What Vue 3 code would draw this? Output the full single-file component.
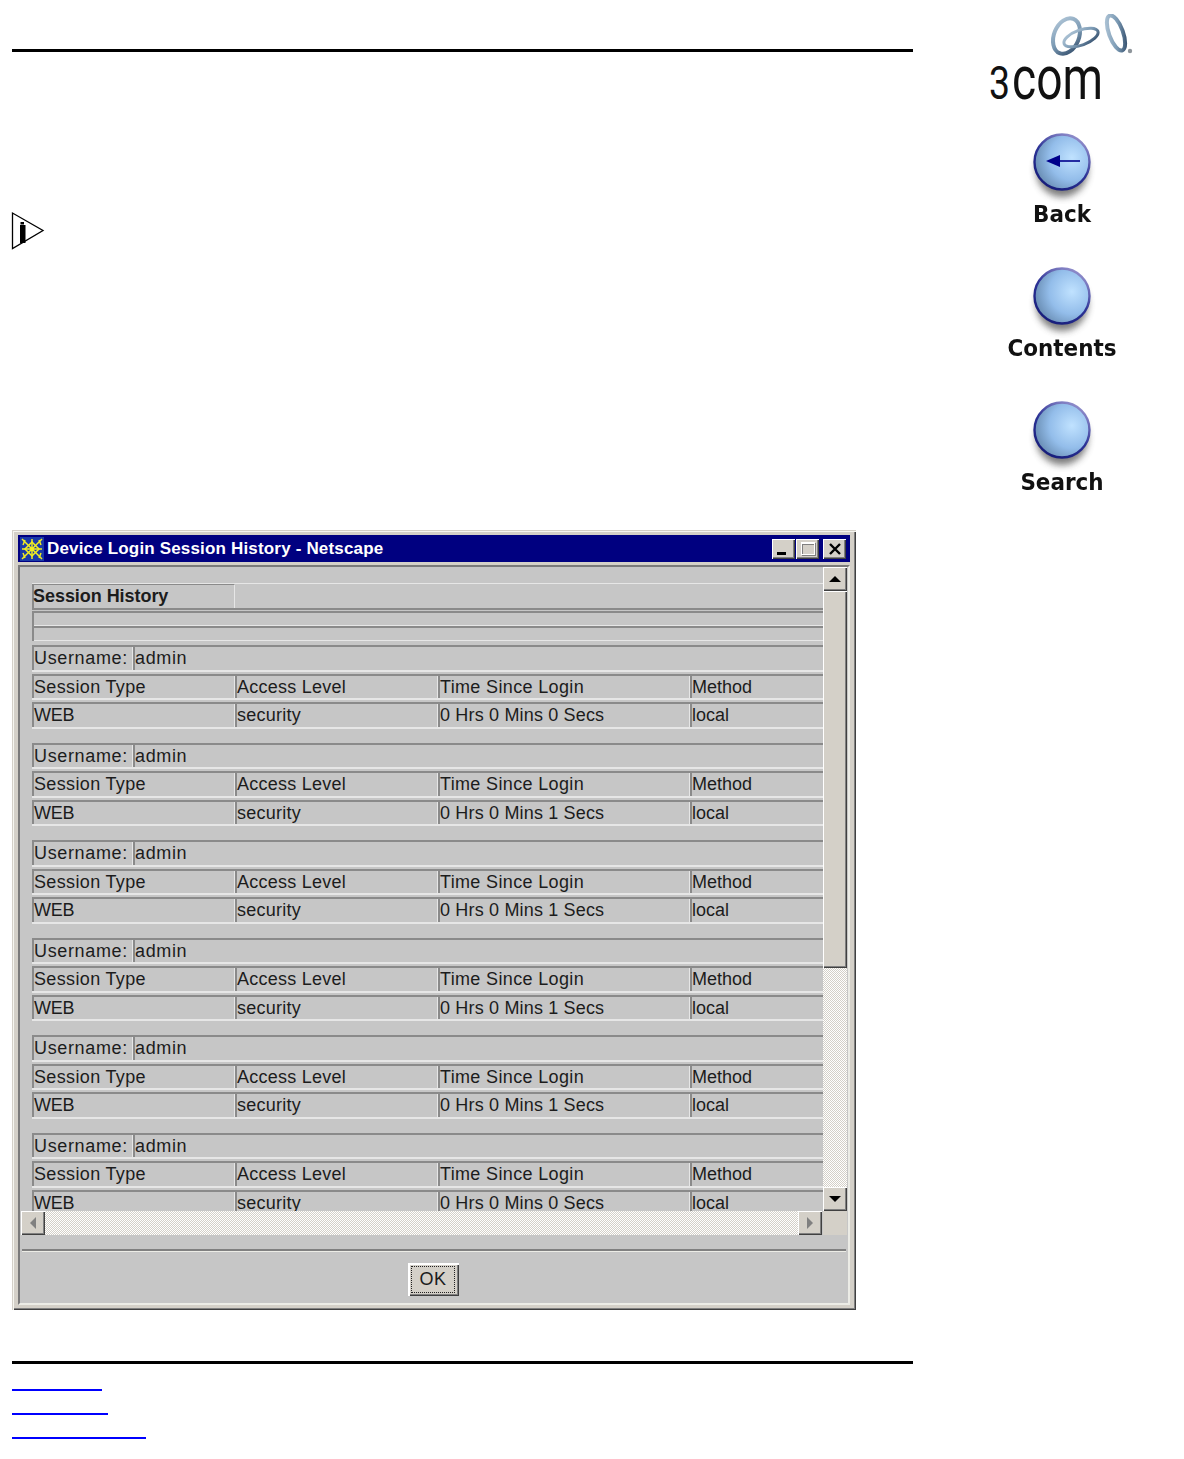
<script setup>
const sessions = ['0', '1', '1', '1', '1', '0']
const links = ['link-a', 'link-b', 'link-c']
const navs = [
  { label: 'Back', arrow: true },
  { label: 'Contents', arrow: false },
  { label: 'Search', arrow: false }
]
</script>

<template>
  <div class="page">
    <main class="main">
      <div class="rule"></div>
      <svg class="info" width="34" height="40" viewBox="0 0 34 40">
        <path d="M1.5 2 V37.5 L32 19.5 Z" fill="#fff" stroke="#000" stroke-width="1.3" />
        <rect x="9.5" y="11" width="3.5" height="2.5" fill="#000" />
        <rect x="9" y="14" width="5.5" height="18" fill="#000" />
      </svg>

      <section class="window">
        <header class="titlebar">
          <svg class="ticon" width="24" height="24" viewBox="0 0 24 24">
            <rect width="24" height="24" fill="#1a3aa8" />
            <g stroke="#f2ee20" stroke-width="1.5" fill="none">
              <path d="M2 2 L22 22 M22 2 L2 22 M12 2 V22 M2 12 H22" />
              <path d="M12 5 L19 12 L12 19 L5 12 Z" />
              <path d="M5 3 L3 8 M19 3 L21 8 M5 21 L3 16 M19 21 L21 16" />
            </g>
          </svg>
          <span class="ttext">Device Login Session History - Netscape</span>
          <div class="tbtns">
            <button class="tbtn"><i class="min"></i></button>
            <button class="tbtn"><i class="max"></i></button>
            <button class="tbtn close">
              <svg width="14" height="12" viewBox="0 0 14 12"><path d="M2 1 L12 11 M12 1 L2 11" stroke="#000" stroke-width="2.4" /></svg>
            </button>
          </div>
        </header>

        <div class="client">
          <div class="pane">
            <div class="view">
              <div class="row head"><div class="cell c1"><b>Session History</b></div></div>
              <div class="blank"><div class="thin"></div><div class="thin"></div></div>
              <div v-for="(s, i) in sessions" :key="i" class="group">
                <div class="row">
                  <div class="cell cu">Username:</div>
                  <div class="cell cv">admin</div>
                </div>
                <div class="row">
                  <div class="cell c1">Session Type</div>
                  <div class="cell c2">Access Level</div>
                  <div class="cell c3">Time Since Login</div>
                  <div class="cell c4">Method</div>
                </div>
                <div class="row">
                  <div class="cell c1 tight">WEB</div>
                  <div class="cell c2">security</div>
                  <div class="cell c3 data">0 Hrs 0 Mins {{ s }} Secs</div>
                  <div class="cell c4">local</div>
                </div>
              </div>
            </div>

            <div class="vbar">
              <div class="sbtn"><i class="tri up"></i></div>
              <div class="thumb"></div>
              <div class="track"></div>
              <div class="sbtn"><i class="tri down"></i></div>
            </div>

            <div class="hbar">
              <div class="sbtn"><i class="tri left"></i></div>
              <div class="track"></div>
              <div class="sbtn"><i class="tri right"></i></div>
            </div>
            <div class="corner"></div>
          </div>

          <div class="sep"></div>
          <div class="foot">
            <button class="ok"><span>OK</span></button>
          </div>
        </div>
      </section>

      <div class="rule lower"></div>
      <nav class="links">
        <a v-for="l in links" :key="l" href="#" class="link" :class="l"></a>
      </nav>
    </main>

    <aside class="side">
      <svg class="logo" width="160" height="106" viewBox="0 0 160 106">
        <defs>
          <linearGradient id="ring" x1="0" y1="0" x2="1" y2="1">
            <stop offset="0" stop-color="#b4c9da" />
            <stop offset=".55" stop-color="#7a99b3" />
            <stop offset="1" stop-color="#2c4664" />
          </linearGradient>
        </defs>
        <g fill="none" stroke="url(#ring)">
          <ellipse cx="83.5" cy="22" rx="12.5" ry="18.5" transform="rotate(22 83.5 22)" stroke-width="4" />
          <ellipse cx="98" cy="23.5" rx="18" ry="7.5" transform="rotate(-20 98 23.5)" stroke-width="3" />
          <ellipse cx="133" cy="19" rx="7" ry="18.5" transform="rotate(-20 133 19)" stroke-width="4" />
        </g>
        <circle cx="147" cy="37" r="2.2" fill="#8e959b" />
        <text class="brand three" x="6" y="85" textLength="21" lengthAdjust="spacingAndGlyphs">3</text>
        <text class="brand" x="29" y="85" textLength="91" lengthAdjust="spacingAndGlyphs">com</text>
      </svg>

      <div v-for="n in navs" :key="n.label" class="nav">
        <svg width="70" height="72" viewBox="0 0 70 72">
          <defs>
            <radialGradient :id="'b' + n.label" cx=".68" cy=".42" r=".82">
              <stop offset="0" stop-color="#c0e2ff" />
              <stop offset=".5" stop-color="#93bdea" />
              <stop offset="1" stop-color="#56779a" />
            </radialGradient>
            <linearGradient :id="'e' + n.label" x1=".8" y1="0" x2=".2" y2="1">
              <stop offset="0" stop-color="#9a96d0" />
              <stop offset=".5" stop-color="#2c3296" />
              <stop offset="1" stop-color="#151b78" />
            </linearGradient>
            <filter :id="'s' + n.label" x="-30%" y="-30%" width="160%" height="160%">
              <feGaussianBlur stdDeviation="3.5" />
            </filter>
          </defs>
          <ellipse cx="35" cy="38" rx="26" ry="27" fill="#444" opacity=".7" :filter="'url(#s' + n.label + ')'" />
          <circle cx="35" cy="30" r="27.5" :fill="'url(#b' + n.label + ')'" :stroke="'url(#e' + n.label + ')'" stroke-width="2.4" />
          <g v-if="n.arrow">
            <path d="M19 29 L33 23 V35 Z" fill="#00008b" />
            <path d="M30 29 H53" stroke="#00008b" stroke-width="1.6" />
          </g>
        </svg>
        <div class="nav-label">{{ n.label }}</div>
      </div>
    </aside>
  </div>
</template>

<style scoped>
.page {
  display: flex;
  width: 1184px;
  height: 1459px;
  background: #fff;
  overflow: hidden;
  font-family: "Liberation Sans", Arial, sans-serif;
}
.main {
  width: 901px;
  margin-left: 12px;
  padding-top: 49px;
  flex: none;
}
.rule {
  height: 3px;
  background: #000;
}
.info {
  display: block;
  margin: 159px 0 0 -1px;
}
.window {
  width: 844px;
  height: 780px;
  margin-top: 279px;
  box-sizing: border-box;
  padding: 5px 6px 5px 6px;
  background: #d4d0c8;
  box-shadow: inset 1px 1px 0 #d4d0c8, inset 2px 2px 0 #f6f6f0, inset -1px -1px 0 #404040, inset -2px -2px 0 #808080;
  display: flex;
  flex-direction: column;
}
.titlebar {
  height: 27px;
  flex: none;
  display: flex;
  align-items: center;
  background: #000080;
  padding-left: 2px;
  color: #fff;
}
.ticon {
  flex: none;
}
.ttext {
  margin-left: 3px;
  font-size: 17px;
  font-weight: 700;
  letter-spacing: .17px;
  white-space: nowrap;
}
.tbtns {
  margin-left: auto;
  display: flex;
  padding-right: 4px;
}
.tbtn {
  width: 23px;
  height: 20px;
  padding: 0;
  margin-left: 1px;
  border: 0;
  background: #d4d0c8;
  box-shadow: inset 1px 1px 0 #fff, inset -1px -1px 0 #404040, inset -2px -2px 0 #808080;
  display: flex;
  align-items: center;
  justify-content: center;
}
.close {
  margin-left: 4px;
}
.min {
  display: block;
  width: 9px;
  height: 3px;
  background: #000;
  margin: 9px 5px 0 0;
}
.max {
  display: block;
  width: 14px;
  height: 13px;
  box-sizing: border-box;
  border: 1px solid #fff;
  border-top-width: 2px;
  box-shadow: 1px 1px 0 #808080, inset 1px 1px 0 #808080;
}
.client {
  flex: 1;
  margin-top: 3px;
  box-sizing: border-box;
  background: #c6c6c6;
  border-style: solid;
  border-width: 2px;
  border-color: #7a7a7a #ecece6 #ecece6 #7a7a7a;
  display: flex;
  flex-direction: column;
}
.pane {
  display: grid;
  grid-template-columns: 803px 24px;
  grid-template-rows: 644px 24px;
}
.view {
  overflow: hidden;
  padding: 16px 0 0 12px;
  box-sizing: border-box;
  font-size: 18px;
  color: #1c1c1c;
}
.row {
  display: flex;
  height: 22.5px;
  box-sizing: content-box;
  border-top: 2px solid #8a8a8a;
  border-bottom: 2px solid #e6e6e6;
  margin-bottom: 2px;
  white-space: nowrap;
  line-height: 22.5px;
  width: 820px;
}
.row.head {
  border-top-color: #e6e6e6;
  border-top-width: 1px;
  border-bottom-color: #8a8a8a;
  height: 24px;
  line-height: 24px;
  margin-bottom: 1px;
}
.cell {
  box-sizing: border-box;
  border-left: 2px solid #8a8a8a;
  border-right: 1px solid #e6e6e6;
  letter-spacing: .35px;
}
.head .cell {
  border-top: 1px solid #8a8a8a;
  height: 24px;
  line-height: 22px;
}
.head b {
  color: #1c1c1c;
  font-size: 18px;
  letter-spacing: -.05px;
  margin-left: -1px;
}
.tight {
  letter-spacing: -.3px;
}
.data {
  letter-spacing: .17px;
}
.c1 { width: 203px; }
.c2 { width: 203px; letter-spacing: .25px; }
.c3 { width: 252px; }
.c4 { flex: 1; letter-spacing: 0; }
.cu { width: 101px; letter-spacing: .65px; }
.cv { flex: 1; letter-spacing: .65px; }
.blank {
  margin-top: 1px;
  margin-bottom: 4px;
  border-left: 2px solid #8a8a8a;
  width: 820px;
}
.thin {
  height: 12px;
  border-top: 2px solid #8a8a8a;
  border-bottom: 1px solid #e6e6e6;
}
.group {
  height: 97.6px;
  box-sizing: border-box;
}
.vbar {
  display: flex;
  flex-direction: column;
  width: 24px;
}
.hbar {
  display: flex;
  padding: 0 1px;
  height: 24px;
}
.corner {
  background: #d4d0c8;
}
.sbtn {
  flex: none;
  width: 24px;
  height: 24px;
  background: #d4d0c8;
  box-sizing: border-box;
  box-shadow: inset 1px 1px 0 #fff, inset -1px -1px 0 #404040, inset -2px -2px 0 #808080;
  display: flex;
  align-items: center;
  justify-content: center;
}
.thumb {
  flex: none;
  height: 377px;
  background: #d4d0c8;
  box-shadow: inset 1px 1px 0 #fff, inset -1px -1px 0 #404040, inset -2px -2px 0 #808080;
}
.track {
  flex: 1;
  background: repeating-conic-gradient(#d4d0c8 0 25%, #fff 0 50%) 0 0 / 2px 2px;
}
.tri {
  display: block;
  width: 0;
  height: 0;
  border-style: solid;
  border-color: transparent;
}
.up { border-width: 0 6px 6px; border-bottom-color: #000; }
.down { border-width: 6px 6px 0; border-top-color: #000; }
.left { border-width: 6px 6px 6px 0; border-right-color: #808080; }
.right { border-width: 6px 0 6px 6px; border-left-color: #808080; }
.sep {
  margin: 14px 2px 0;
  height: 3px;
  box-sizing: border-box;
  border-top: 2px solid #808080;
  border-bottom: 1px solid #ecece6;
}
.foot {
  display: flex;
  justify-content: center;
  padding-top: 11px;
  margin-left: -1px;
}
.ok {
  width: 51px;
  height: 33px;
  padding: 3px;
  border: 0;
  background: #d4d0c8;
  box-shadow: inset 2px 2px 0 #fff, inset -1px -1px 0 #404040, inset -2px -2px 0 #808080;
  font: 18px "Liberation Sans", Arial, sans-serif;
  color: #1c1c1c;
  letter-spacing: .5px;
}
.ok span {
  display: flex;
  align-items: center;
  justify-content: center;
  height: 100%;
  border: 1px dotted #222;
  box-sizing: border-box;
  margin-right: 1px;
}
.lower {
  margin-top: 51px;
}
.links {
  display: flex;
  flex-direction: column;
  align-items: flex-start;
  padding-top: 25px;
  gap: 22px;
}
.link {
  display: block;
  height: 2px;
  background: #0000ff;
}
.link-a { width: 90px; }
.link-b { width: 96px; }
.link-c { width: 134px; }
.side {
  width: 180px;
  margin-left: 59px;
  flex: none;
  display: flex;
  flex-direction: column;
  align-items: center;
}
.logo {
  display: block;
  margin-top: 14px;
  margin-left: 2px;
  margin-bottom: 12px;
}
.brand {
  font-family: Roboto, "Liberation Sans", sans-serif;
  font-weight: 400;
  font-size: 62px;
  fill: #111;
}
.three {
  font-size: 46px;
}
.nav {
  height: 134px;
  display: flex;
  flex-direction: column;
  align-items: center;
}
.nav svg {
  display: block;
  flex: none;
}
.nav-label {
  margin-top: -5px;
  font-family: "DejaVu Sans", sans-serif;
  font-weight: 700;
  font-size: 21.5px;
  line-height: 30px;
  color: #111;
  transform: scaleY(1.08);
}
</style>
